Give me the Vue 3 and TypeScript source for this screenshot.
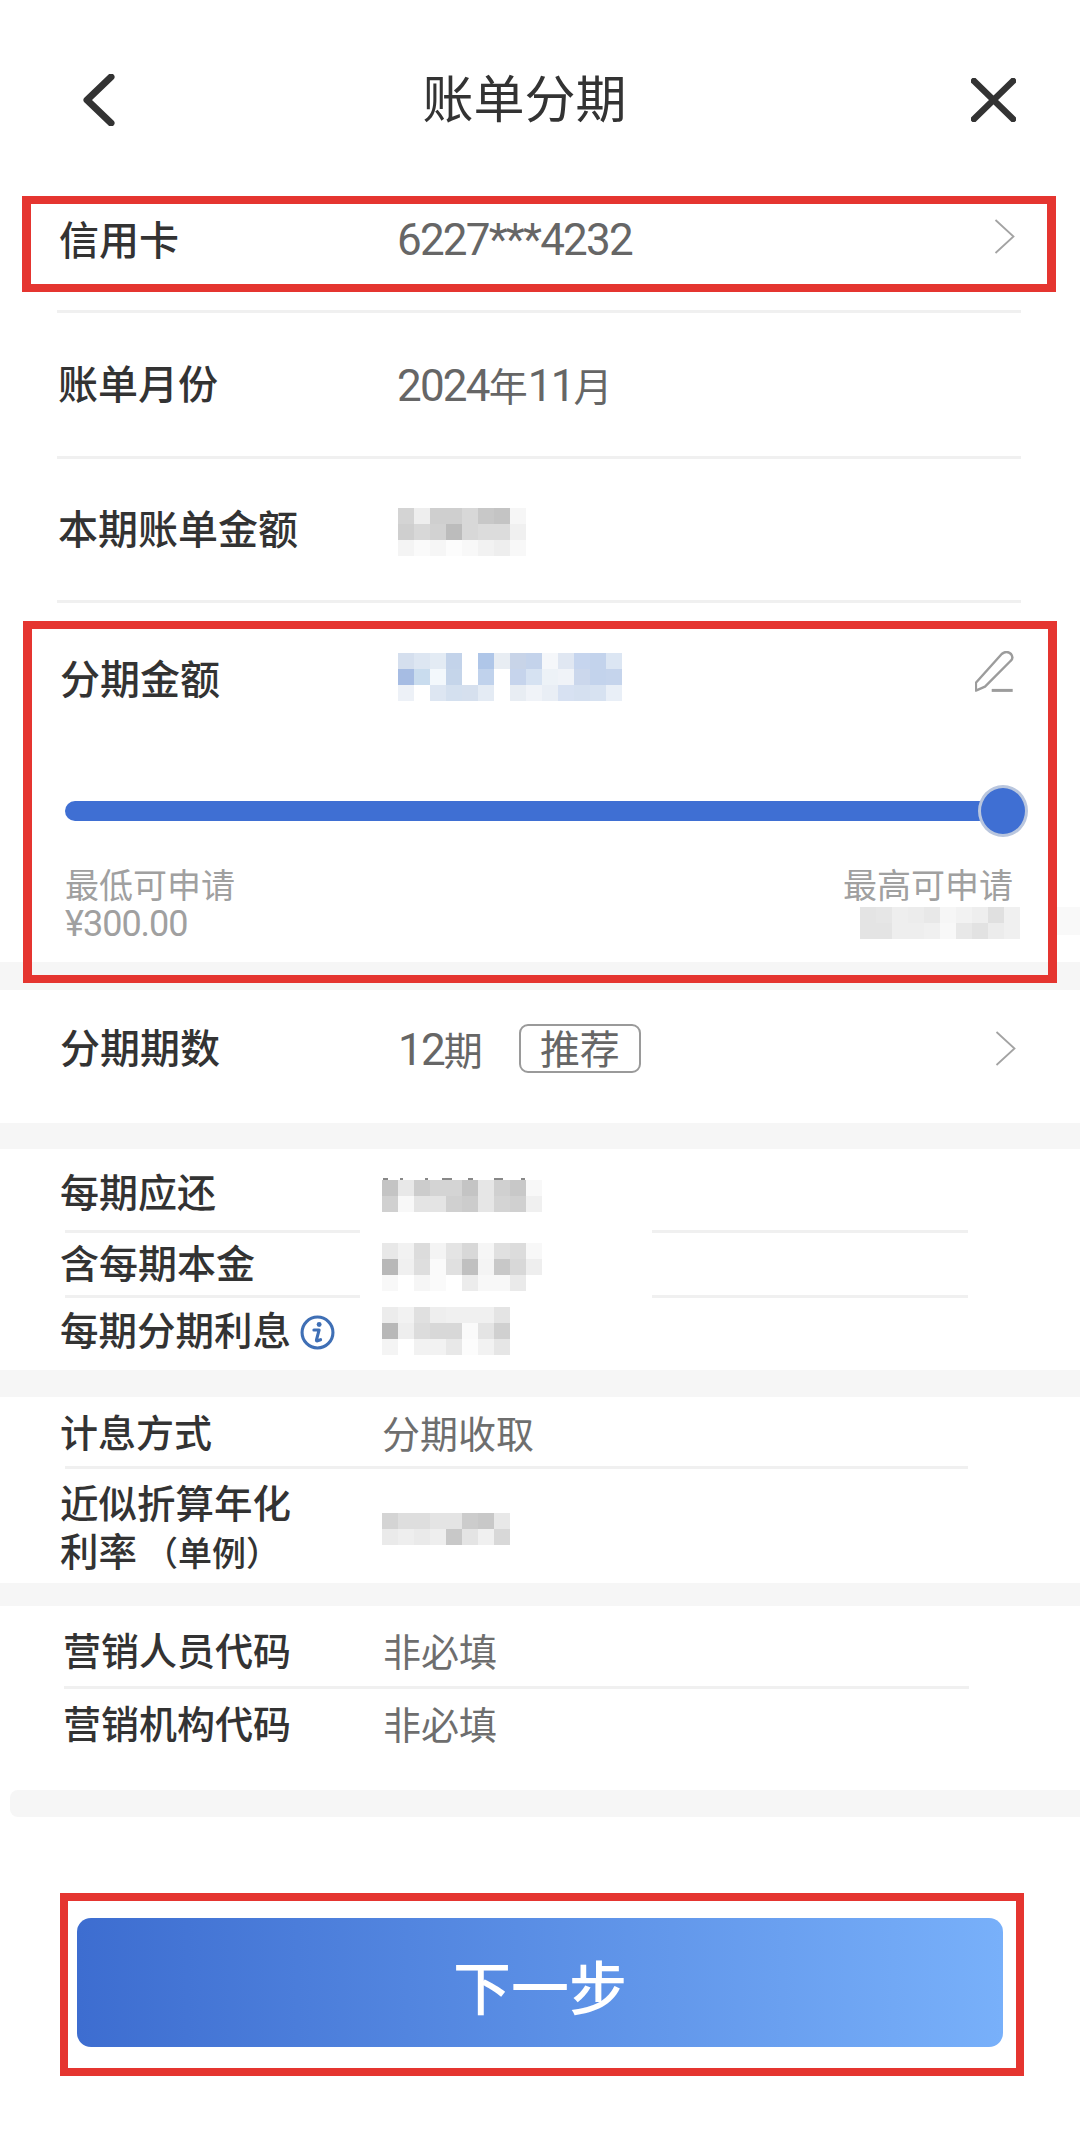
<script setup lang="ts">
type Mosaic = { cols: number; cells: string[] }

function mosaic(...rows: string[]): Mosaic {
  const parsed = rows.map((r) => r.split(' '))
  const cells = parsed.flat().map((c) => (c.length === 2 ? `#${c}${c}${c}` : `#${c}`))
  return { cols: parsed[0].length, cells }
}

const billMosaic = mosaic(
  'd4 ee cf cf d8 c8 c4 f6',
  'cf d8 d2 bc d8 dc dc f0',
  'f4 fa f6 fc f8 f2 ee f8',
)
const amountMosaic = mosaic(
  'd5dfee dde6f2 e3ebf4 c3d3ea ffffff afc6e8 e8edf3 c8d4e8 c4d3eb f5f7fa e0e7f2 c6d5ee c3d3ec dce6f3',
  'a6bce3 c9dcee f3f8fc c5d5ea ffffff c0d2ec ffffff c6d4ec d6e2f2 edf2f7 f0f3f8 cbd7ec c3d3ec c5d4ec',
  'edf1f7 ffffff dde6f2 d4e0ef d6e0ee e4ebf4 ffffff e8edf3 f0f3f8 e9eef5 d7e1f2 d5e0f0 d7e2f1 e9eff7',
)
const maxMosaic = mosaic(
  'e4 e6 ee ec e8 f6 f2 ee e0 f0',
  'e4 e4 ee ee f0 f8 e8 e2 ec f0',
)
const repayMosaic = mosaic(
  'c4 e8 cc d4 d4 c4 e6 d0 c8 f8',
  'd0 f8 e4 e4 d0 cc e6 d4 d0 f0',
)
const principalMosaic = mosaic(
  'e8 f2 dc f4 e4 d8 f6 e0 dc f8',
  'b8 f0 de fa e0 c0 f4 c8 d8 ee',
  'f8 ff f6 fa ff ec f8 f8 ea ff',
)
const interestMosaic = mosaic(
  'ec f2 e0 ee f0 f0 f0 e4',
  'b8 ee dc d8 d8 fa e4 d0',
  'f4 ff f2 f2 e8 fc f2 e6',
)
const rateMosaic = mosaic(
  'd4 de de e4 e4 cc c8 e8',
  'ea ee ea ee c8 e4 f0 d8',
)

const mosaics = { billMosaic, amountMosaic, maxMosaic, repayMosaic, principalMosaic, interestMosaic, rateMosaic }
</script>

<template>
  <div class="page">
    <header class="header">
      <svg class="back" viewBox="0 0 34 52" fill="none">
        <path d="M30 3 L6 26 L30 49" stroke="#333" stroke-width="7" stroke-linecap="round" stroke-linejoin="round" />
      </svg>
      <h1 class="title">账单分期</h1>
      <svg class="close" viewBox="0 0 45 44" fill="none">
        <path d="M3 3 L42 41 M42 3 L3 41" stroke="#333" stroke-width="6.5" stroke-linecap="round" />
      </svg>
    </header>

    <section class="card-row">
      <span class="label col-card">信用卡</span>
      <span class="value"><span class="num">6227***4232</span></span>
      <svg class="chevron card-chevron" viewBox="0 0 21 35" fill="none">
        <path d="M1.5 1 L19.5 17.5 L1.5 34" stroke="#a3a3a3" stroke-width="1.8" />
      </svg>
    </section>

    <div class="rule rule-top"></div>
    <div class="info-row">
      <span class="label col-info">账单月份</span>
      <span class="value"><span class="num">2024</span>年<span class="num">11</span>月</span>
    </div>
    <div class="rule rule-top"></div>
    <div class="info-row bill">
      <span class="label col-info">本期账单金额</span>
      <div class="mosaic" :style="{ gridTemplateColumns: `repeat(${mosaics.billMosaic.cols}, 16px)` }">
        <i v-for="(c, i) in mosaics.billMosaic.cells" :key="i" :style="{ background: c }"></i>
      </div>
    </div>
    <div class="rule rule-top"></div>

    <section class="amount">
      <div class="mark"></div>
      <div class="edge-patch"></div>
      <div class="amount-head">
        <span class="label col-amount">分期金额</span>
        <div class="mosaic" :style="{ gridTemplateColumns: `repeat(${mosaics.amountMosaic.cols}, 16px)` }">
          <i v-for="(c, i) in mosaics.amountMosaic.cells" :key="i" :style="{ background: c }"></i>
        </div>
        <svg class="pencil" viewBox="0 0 40 42" fill="none">
          <path d="M0.9 39.6 V31.7 L26.7 3 Q31.7 -1 36 3 Q39 7 35.5 10 L10 35.7 Z" stroke="#9c9c9c" stroke-width="2.4" stroke-linejoin="round" />
          <path d="M16.7 39.4 H37.7" stroke="#9c9c9c" stroke-width="3" />
        </svg>
      </div>
      <div class="slider">
        <div class="track"></div>
        <div class="thumb"></div>
      </div>
      <div class="range">
        <div class="range-col">
          <span class="range-label">最低可申请</span>
          <span class="range-value">¥300.00</span>
        </div>
        <div class="range-col right">
          <span class="range-label max">最高可申请</span>
          <div class="mosaic max-mosaic" :style="{ gridTemplateColumns: `repeat(${mosaics.maxMosaic.cols}, 16px)` }">
            <i v-for="(c, i) in mosaics.maxMosaic.cells" :key="i" :style="{ background: c }"></i>
          </div>
        </div>
      </div>
    </section>

    <div class="band band-28"></div>

    <section class="term">
      <span class="label col-amount">分期期数</span>
      <span class="value"><span class="num">12</span>期</span>
      <span class="tag">推荐</span>
      <svg class="chevron" viewBox="0 0 21 35" fill="none">
        <path d="M1.5 1 L19.5 17.5 L1.5 34" stroke="#a3a3a3" stroke-width="1.8" />
      </svg>
    </section>

    <div class="band band-26"></div>

    <section class="repay">
      <div class="detail-row repay-a">
        <span class="label sm col-detail">每期应还</span>
        <div class="ticked low">
          <div class="ticks"></div>
          <div class="mosaic" :style="{ gridTemplateColumns: `repeat(${mosaics.repayMosaic.cols}, 16px)` }">
            <i v-for="(c, i) in mosaics.repayMosaic.cells" :key="i" :style="{ background: c }"></i>
          </div>
        </div>
      </div>
      <div class="rule-detail split"></div>
      <div class="detail-row repay-b">
        <span class="label sm col-detail">含每期本金</span>
        <div class="mosaic low" :style="{ gridTemplateColumns: `repeat(${mosaics.principalMosaic.cols}, 16px)` }">
          <i v-for="(c, i) in mosaics.principalMosaic.cells" :key="i" :style="{ background: c }"></i>
        </div>
      </div>
      <div class="rule-detail split"></div>
      <div class="detail-row repay-c">
        <div class="col-detail interest">
          <span class="label interest-label">每期分期利息</span>
          <svg class="info" viewBox="0 0 34 34" fill="none">
            <circle cx="17" cy="17" r="15" stroke="#3f6fb5" stroke-width="3" />
            <circle cx="18.6" cy="9.2" r="2.4" fill="#3f6fb5" />
            <path d="M13.5 14.5 H18.6 L16 24.2 Q15.7 25.4 17 25 L20 24" stroke="#3f6fb5" stroke-width="3" stroke-linejoin="round" stroke-linecap="round" />
          </svg>
        </div>
        <div class="mosaic" :style="{ gridTemplateColumns: `repeat(${mosaics.interestMosaic.cols}, 16px)` }">
          <i v-for="(c, i) in mosaics.interestMosaic.cells" :key="i" :style="{ background: c }"></i>
        </div>
      </div>
    </section>

    <div class="band band-27"></div>

    <section class="rate">
      <div class="detail-row rate-a">
        <span class="label xs col-detail">计息方式</span>
        <span class="plain">分期收取</span>
      </div>
      <div class="rule-detail"></div>
      <div class="detail-row rate-b">
        <div class="label col-detail two-line">
          <div>近似折算年化</div>
          <div>利率<span class="note">（单例）</span></div>
        </div>
        <div class="mosaic low" :style="{ gridTemplateColumns: `repeat(${mosaics.rateMosaic.cols}, 16px)` }">
          <i v-for="(c, i) in mosaics.rateMosaic.cells" :key="i" :style="{ background: c }"></i>
        </div>
      </div>
    </section>

    <div class="band band-23"></div>

    <section class="marketing">
      <div class="detail-row market-a">
        <span class="label xs col-market">营销人员代码</span>
        <span class="plain">非必填</span>
      </div>
      <div class="rule-detail market-rule"></div>
      <div class="detail-row market-b">
        <span class="label xs col-market">营销机构代码</span>
        <span class="plain">非必填</span>
      </div>
    </section>

    <div class="band band-last"></div>

    <div class="button-frame">
      <button class="next" type="button">下一步</button>
    </div>
  </div>
</template>

<style scoped>
.page {
  position: relative;
  width: 1080px;
  height: 2143px;
  background: #fff;
  overflow: hidden;
  font-family: Roboto, "Noto Sans CJK SC", sans-serif;
  color: #333;
}
.header {
  height: 196px;
  padding: 3px 64px 0 81px;
  box-sizing: border-box;
  display: flex;
  align-items: center;
  justify-content: space-between;
}
.back {
  width: 34px;
  height: 52px;
}
.close {
  width: 45px;
  height: 44px;
}
.title {
  margin: 2px 37px 0 0;
  font-size: 51px;
  font-weight: 400;
  line-height: 60px;
  color: #333;
}
.label {
  font-family: "Noto Sans CJK SC", sans-serif;
  font-size: 40px;
  font-weight: 500;
  line-height: 48px;
  color: #333;
  white-space: nowrap;
  margin-bottom: 6px;
}
.label.sm {
  font-size: 39px;
}
.label.xs {
  font-size: 38px;
}
.value {
  font-family: "Noto Sans CJK SC", sans-serif;
  font-size: 39px;
  line-height: 48px;
  color: #666;
  white-space: nowrap;
}
.num {
  font-family: Roboto, sans-serif;
  font-size: 44px;
  letter-spacing: -1.8px;
}
.plain {
  font-family: "Noto Sans CJK SC", sans-serif;
  font-size: 38px;
  line-height: 48px;
  color: #6e6e6e;
  margin-bottom: 4px;
}
.card-row {
  height: 96px;
  margin: 0 24px 0 22px;
  padding: 0 32px 10px 28px;
  box-sizing: border-box;
  border: solid #e53530;
  border-width: 8px 9px;
  display: flex;
  align-items: center;
}
.col-card {
  width: 338px;
  flex: none;
  margin-bottom: 2px;
}
.chevron {
  width: 21px;
  height: 35px;
  margin-left: auto;
}
.card-chevron {
  margin-top: -6px;
}
.rule {
  height: 3px;
  background: #f0f0f0;
}
.rule-top {
  margin: 0 59px 0 57px;
}
.card-row + .rule-top {
  margin-top: 18px;
}
.info-row {
  height: 143px;
  padding-left: 58px;
  display: flex;
  align-items: center;
}
.info-row.bill {
  height: 141px;
}
.col-info {
  width: 339px;
  flex: none;
}
.bill .col-info {
  width: 340px;
}
.bill .mosaic {
  margin-top: 5px;
}
.mosaic {
  display: grid;
  flex: none;
  filter: blur(0.7px);
}
.mosaic i {
  display: block;
  height: 16px;
}
.low {
  margin-top: 6px;
}
.ticked {
  position: relative;
  flex: none;
}
.ticks {
  position: absolute;
  left: 0;
  top: -2px;
  width: 145px;
  height: 2px;
  filter: blur(0.5px);
  background: linear-gradient(
    to right,
    transparent 1px,
    #888 1px 6px,
    transparent 6px 18px,
    #888 18px 21px,
    transparent 21px 43px,
    #888 43px 46px,
    transparent 46px 60px,
    #888 60px 70px,
    transparent 70px 86px,
    #888 86px 91px,
    transparent 91px 112px,
    #888 112px 121px,
    transparent 121px 139px,
    #888 139px 143px,
    transparent 143px
  );
}
.amount {
  position: relative;
  height: 359px;
  padding: 50px 60px 0 60px;
  box-sizing: border-box;
}
.mark {
  position: absolute;
  top: 18px;
  left: 23px;
  right: 23px;
  height: 362px;
  box-sizing: border-box;
  border: solid #e53530;
  border-width: 8px 9px;
  z-index: 2;
}
.edge-patch {
  position: absolute;
  right: 0;
  top: 304px;
  width: 23px;
  height: 28px;
  background: #f9f9f9;
}
.amount-head {
  height: 48px;
  display: flex;
  align-items: center;
}
.col-amount {
  width: 338px;
  flex: none;
}
.amount-head .label {
  padding-top: 6px;
}
.pencil {
  width: 40px;
  height: 42px;
  margin: -10px 5px 0 auto;
}
.slider {
  margin: 84px -8px 0 5px;
  height: 52px;
  display: flex;
  align-items: center;
}
.track {
  flex: 1;
  height: 20px;
  border-radius: 10px;
  background: #3f6fd3;
}
.thumb {
  width: 50px;
  height: 52px;
  flex: none;
  margin-left: -12px;
  box-sizing: border-box;
  border-radius: 50%;
  background: #3f6fd3;
  border: 3px solid #b9c6de;
}
.range {
  margin: 28px 0 0 5px;
  display: flex;
  justify-content: space-between;
}
.range-col {
  display: flex;
  flex-direction: column;
}
.range-col.right {
  align-items: flex-end;
}
.range-label {
  font-family: "Noto Sans CJK SC", sans-serif;
  font-size: 34px;
  line-height: 38px;
  color: #a0a0a0;
}
.range-label.max {
  margin-right: 7px;
}
.range-value {
  font-size: 36px;
  letter-spacing: -1px;
  line-height: 42px;
  color: #a0a0a0;
}
.max-mosaic {
  margin-top: 4px;
}
.band {
  background: #f6f6f6;
}
.band-28 {
  height: 28px;
}
.band-26 {
  height: 26px;
}
.band-27 {
  height: 27px;
}
.band-23 {
  height: 23px;
}
.band-last {
  height: 27px;
  margin-left: 10px;
  border-radius: 8px 0 0 8px;
}
.term {
  height: 133px;
  padding: 0 64px 16px 60px;
  box-sizing: border-box;
  display: flex;
  align-items: center;
}
.tag {
  margin-left: 36px;
  width: 122px;
  height: 49px;
  box-sizing: border-box;
  border: 2px solid #9a9a9a;
  border-radius: 9px;
  font-family: "Noto Sans CJK SC", sans-serif;
  font-size: 40px;
  line-height: 42px;
  text-align: center;
  color: #666;
}
.repay {
  height: 221px;
}
.detail-row {
  padding-left: 60px;
  box-sizing: border-box;
  display: flex;
  align-items: center;
}
.col-detail {
  width: 322px;
  flex: none;
}
.repay-a {
  height: 81px;
  padding-top: 7px;
}
.repay-b {
  height: 62px;
}
.repay-c {
  height: 72px;
  padding-bottom: 6px;
}
.rule-detail {
  height: 3px;
  margin: 0 112px 0 65px;
  background: #f0f0f0;
}
.rule-detail.split {
  background: linear-gradient(to right, #f0f0f0 295px, transparent 295px, transparent 587px, #f0f0f0 587px);
}
.interest {
  display: flex;
  align-items: center;
}
.interest-label {
  font-size: 38.5px;
}
.info {
  width: 35px;
  height: 35px;
  margin: 2px 0 0 9px;
}
.rate {
  height: 186px;
}
.rate-a {
  height: 69px;
  padding-top: 4px;
}
.rate-b {
  height: 114px;
}
.two-line {
  font-size: 38.5px;
  line-height: 48px;
  margin-bottom: 0;
}
.note {
  font-size: 34px;
  margin-left: 7px;
}
.marketing {
  height: 184px;
}
.market-a,
.market-b {
  padding-left: 63px;
}
.col-market {
  width: 320px;
  flex: none;
}
.market-a {
  height: 80px;
  padding-top: 12px;
}
.market-rule {
  margin-left: 64px;
  margin-right: 111px;
}
.market-b {
  height: 71px;
}
.button-frame {
  margin: 76px 0 0 60px;
  width: 964px;
  height: 183px;
  box-sizing: border-box;
  border: 8px solid #e53530;
  padding: 17px 13px 21px 9px;
}
.next {
  display: block;
  width: 100%;
  height: 100%;
  border: 0;
  border-radius: 14px;
  background: linear-gradient(to right, #3d6dd0, #78b0fa);
  color: #fff;
  font-family: "Noto Sans CJK SC", sans-serif;
  font-size: 58px;
  font-weight: 500;
  padding: 5px 0 0;
}
</style>
